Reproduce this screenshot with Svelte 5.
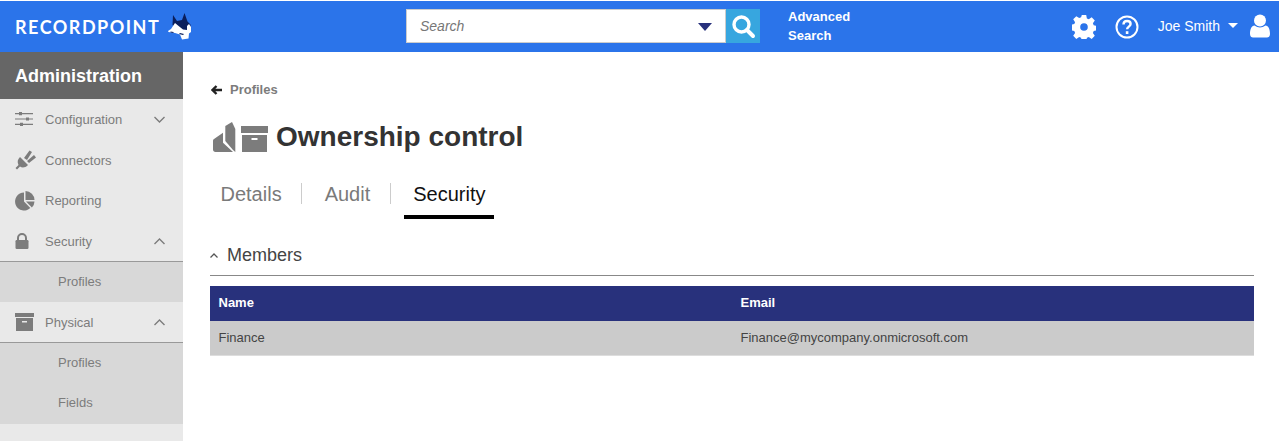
<script>
  const menu = [
    { label: "Configuration", icon: "sliders", arrow: "down" },
    { label: "Connectors", icon: "plug" },
    { label: "Reporting", icon: "pie" },
    { label: "Security", icon: "lock", arrow: "up", children: ["Profiles"] },
    { label: "Physical", icon: "box", arrow: "up", children: ["Profiles", "Fields"] }
  ];
</script>

<div class="page">
  <header class="topbar">
    <div class="logo">
      <span class="wordmark">RECORDPOINT</span>
      <svg class="dog" width="24" height="27" viewBox="0 0 24 27">
        <path fill="#0b1f5c" d="M5 2l4 6 5-1 2.500-7 3 8.500 3 3V18l-3 1-9-2-6-5z" />
        <path fill="#fff" d="M7 10l3 2.500 5 4 4 .5V13l2-2 2 3v5l-2 1.500-.5 5-6.500 1-2-5-5-1.500-6.500-1L0 18l3-2z" />
        <path fill="#0b1f5c" d="M2.500 18.500l3 .5v1l-3-.5zM12 20l4 1-1 1-4-1z" />
      </svg>
    </div>
    <div class="search">
      <div class="search-box">
        <span class="placeholder">Search</span>
        <span class="caret"></span>
      </div>
      <button class="search-btn" aria-label="Search">
        <svg width="26" height="26" viewBox="0 0 26 26" fill="none" stroke="#fff">
          <circle cx="11.500" cy="11.500" r="7.500" stroke-width="3.400" />
          <path d="M17 17l6 6" stroke-width="4" stroke-linecap="round" />
        </svg>
      </button>
    </div>
    <div class="advanced">Advanced<br />Search</div>
    <div class="actions">
      <svg class="gear" width="24" height="24" viewBox="0 0 24 24">
        <path fill="#fff" fill-rule="evenodd" d="M9.800 0h4.400l.7 3.400 1.900.8 2.900-1.900 3.100 3.100-1.900 2.900.8 1.900 3.400.7v4.400l-3.400.7-.8 1.900 1.900 2.900-3.100 3.100-2.900-1.900-1.900.8-.7 3.400H9.800l-.7-3.400-1.900-.8-2.900 1.900-3.100-3.100 1.900-2.900-.8-1.900-3.400-.7V9.800l3.400-.7.8-1.900-1.900-2.900 3.100-3.100 2.900 1.900 1.900-.8z M12 8.200a3.800 3.800 0 1 0 0 7.600 3.800 3.800 0 0 0 0-7.600z" />
      </svg>
      <svg class="help" width="24" height="24" viewBox="0 0 24 24" fill="none" stroke="#fff">
        <circle cx="12" cy="12" r="10.500" stroke-width="2" />
        <path d="M8.500 9.500c0-2.300 1.500-3.500 3.600-3.500s3.500 1.200 3.500 3c0 2.600-3.500 2.600-3.500 5.200" stroke-width="2.400" />
        <path d="M12.100 16.200v2.800" stroke-width="2.600" />
      </svg>
      <span class="user">Joe Smith</span>
      <span class="user-caret"></span>
      <svg class="avatar" width="20" height="24" viewBox="0 0 20 24">
        <circle cx="10" cy="6.500" r="6" fill="#fff" />
        <path fill="#fff" d="M0 20c0-5 1.500-8 4.500-8.500 3.500 2.500 7.500 2.500 11 0 3 .5 4.500 3.500 4.500 8.500 0 2.500-1.500 3.500-3 3.500H3c-1.500 0-3-1-3-3.500z" />
      </svg>
    </div>
  </header>

  <div class="body">
    <aside class="sidebar">
      <h2>Administration</h2>
      {#each menu as item}
        <div class="item" class:open={item.children}>
          <span class="icon">
            {#if item.icon === "sliders"}
              <svg width="18" height="16" viewBox="0 0 18 16" fill="#7c7c7c">
                <path d="M0 2h18v1.200H0zM0 7.400h18v1.200H0zM0 12.800h18V14H0z" />
                <path d="M4 1h3v3.200H4zM11 6.400h3v3.200h-3zM5 11.800h3V15H5z" />
              </svg>
            {:else if item.icon === "plug"}
              <svg width="21" height="20" viewBox="0 0 21 20" fill="#7c7c7c">
                <path d="M5 7l8 8c-3 3-6 3-8 1.500L2 19.500.5 18l3-3C2 12 2.500 9.500 5 7z" />
                <path d="M9 8l5.500-7.500L17 2l-5 8zM12 11l7-6 2 2.500-7 5.500z" />
              </svg>
            {:else if item.icon === "pie"}
              <svg width="20" height="20" viewBox="0 0 20 20" fill="#7c7c7c">
                <path d="M9 1.500A9 9 0 1 0 15.300 17L9 10.500z" />
                <path d="M10.500 0a9 9 0 0 1 9 9h-9z" />
                <path d="M11 10.500h8.500a9 9 0 0 1-2.600 6z" />
              </svg>
            {:else if item.icon === "lock"}
              <svg width="14" height="16" viewBox="0 0 14 16">
                <path fill="none" stroke="#7c7c7c" stroke-width="2" d="M3 8V5a4 4 0 0 1 8 0v3" />
                <rect x="0.500" y="7" width="13" height="9" rx="1.200" fill="#7c7c7c" />
              </svg>
            {:else}
              <svg width="19" height="18" viewBox="0 0 19 18" fill="#7c7c7c">
                <rect width="19" height="4" />
                <path fill-rule="evenodd" d="M1 5h17v13H1zM7 8v1.500h5V8z" />
              </svg>
            {/if}
          </span>
          <span class="label">{item.label}</span>
          {#if item.arrow}
            <svg class="arrow" width="11" height="7" viewBox="0 0 11 7" fill="none" stroke="#7c7c7c" stroke-width="1.400">
              <path d={item.arrow === "up" ? "M.5 6l5-5 5 5" : "M.5 1l5 5 5-5"} />
            </svg>
          {/if}
        </div>
        {#if item.children}
          <div class="sub">
            {#each item.children as child}
              <div class="sub-item">{child}</div>
            {/each}
          </div>
        {/if}
      {/each}
    </aside>

    <main class="content">
      <div class="back">
        <svg width="11" height="10" viewBox="0 0 11 10" fill="none" stroke="#222" stroke-width="2.400">
          <path d="M5.500 1L1.500 5l4 4M2 5h9" />
        </svg>
        <span>Profiles</span>
      </div>
      <div class="title">
        <svg class="t1" width="23" height="30" viewBox="0 0 23 30" fill="#7c7c7c">
          <path d="M12.300 4L19 0l3.300 7v23L20 28l-7.700-9z" />
          <path d="M0 19c0-1 .5-1.500 1-1.900l9-6.400v10L20 30H2.500C1 30 0 29 0 27.500z" />
        </svg>
        <svg class="t2" width="27" height="26" viewBox="0 0 27 26" fill="#7c7c7c">
          <rect width="27" height="7" />
          <path fill-rule="evenodd" d="M1 9h25v17H1zM10.500 12v2h6v-2z" />
        </svg>
        <h1>Ownership control</h1>
      </div>
      <nav class="tabs">
        <span class="tab">Details</span>
        <span class="tab">Audit</span>
        <span class="tab active">Security</span>
      </nav>
      <div class="section">
        <svg width="8" height="5" viewBox="0 0 8 5" fill="none" stroke="#555" stroke-width="1.300">
          <path d="M.500 4.500L4 1l3.500 3.500" />
        </svg>
        <span>Members</span>
      </div>
      <table>
        <thead>
          <tr><th>Name</th><th>Email</th></tr>
        </thead>
        <tbody>
          <tr><td>Finance</td><td>Finance@mycompany.onmicrosoft.com</td></tr>
        </tbody>
      </table>
    </main>
  </div>
</div>

<style>
  :global(body) {
    margin: 0;
    background: #fff;
  }

  .page {
    height: 441px;
    overflow: hidden;
    font-family: "Liberation Sans", Arial, sans-serif;
    padding-top: 1px;
    box-sizing: border-box;
  }

  .topbar {
    height: 51px;
    background: #2b74ea;
    display: flex;
    align-items: center;
    color: #fff;
  }

  .logo {
    width: 406px;
    flex: none;
    display: flex;
    align-items: center;
    padding-left: 15px;
    box-sizing: border-box;
  }

  .wordmark {
    font-family: Lato, sans-serif;
    font-weight: 700;
    font-size: 18px;
    letter-spacing: 1.500px;
    color: #fff;
  }

  .dog {
    margin-left: 8px;
    margin-top: -1px;
  }

  .search {
    display: flex;
    width: 354px;
    height: 34px;
    flex: none;
    margin-top: -1px;
  }

  .search-box {
    flex: 1;
    background: #fff;
    border: 1px solid #ccc;
    display: flex;
    align-items: center;
    justify-content: space-between;
    padding: 0 13px 0 13px;
    box-sizing: border-box;
  }

  .placeholder {
    font-style: italic;
    font-size: 14px;
    color: #777;
  }

  .caret {
    border-left: 7px solid transparent;
    border-right: 7px solid transparent;
    border-top: 8px solid #28317c;
    margin-top: 2px;
  }

  .search-btn {
    width: 34px;
    height: 34px;
    background: #37a6df;
    border: none;
    padding: 0;
    display: flex;
    align-items: center;
    justify-content: center;
  }

  .advanced {
    margin-left: 28px;
    margin-top: -1px;
    font-size: 13px;
    font-weight: 700;
    line-height: 19px;
  }

  .actions {
    margin-left: auto;
    display: flex;
    align-items: center;
    padding-right: 9px;
  }

  .gear {
    margin-right: 19px;
  }

  .help {
    margin-right: 19px;
  }

  .user {
    font-size: 14px;
    margin-top: -2px;
  }

  .user-caret {
    border-left: 5px solid transparent;
    border-right: 5px solid transparent;
    border-top: 5px solid #fff;
    margin: -2px 12px 0 8px;
  }

  .avatar {
    margin-top: -2px;
  }

  .body {
    display: flex;
    height: 389px;
  }

  .sidebar {
    width: 183px;
    flex: none;
    background: #e9e9e9;
    margin-right: 27px;
  }

  .sidebar h2 {
    margin: 0;
    height: 47px;
    background: #666;
    color: #fff;
    font-size: 18px;
    font-weight: 700;
    line-height: 49px;
    padding-left: 15px;
  }

  .item {
    height: 40.750px;
    display: flex;
    align-items: center;
    position: relative;
    box-sizing: border-box;
  }

  .item.open {
    border-bottom: 1px solid #999;
  }

  .icon {
    width: 45px;
    padding-left: 15px;
    box-sizing: border-box;
    flex: none;
    display: flex;
  }

  .label {
    font-size: 13px;
    color: #7c7c7c;
  }

  .arrow {
    margin-left: auto;
    margin-right: 18px;
  }

  .sub {
    background: #d8d8d8;
  }

  .sub-item {
    height: 40.250px;
    line-height: 39px;
    padding-left: 58px;
    font-size: 13px;
    color: #7c7c7c;
  }

  .content {
    width: 1044px;
    flex: none;
  }

  .back {
    display: flex;
    align-items: center;
    gap: 8px;
    margin: 30px 0 0 1px;
    font-size: 13px;
    font-weight: 700;
    color: #7c7c7c;
    line-height: 16px;
  }

  .title {
    display: flex;
    align-items: center;
    margin: 20px 0 0 3px;
    height: 38px;
  }

  .t2 {
    margin: 0 8px 4px 5px;
    align-self: flex-end;
  }

  h1 {
    margin: 0;
    font-size: 28px;
    font-weight: 700;
    color: #333;
  }

  .tabs {
    display: flex;
    margin-top: 17px;
    height: 46px;
  }

  .tab {
    font-size: 20px;
    line-height: 22px;
    color: #7a7a7a;
    padding: 10px 20px 0 0;
    position: relative;
  }

  .tab:nth-child(1) {
    padding-left: 10.500px;
    margin-right: 23px;
  }

  .tab:nth-child(2) {
    padding-right: 21px;
    margin-right: 13px;
  }

  .tab:not(.active)::after {
    content: "";
    position: absolute;
    right: 0;
    top: 10px;
    height: 21px;
    width: 1px;
    background: #ccc;
  }

  .tab.active {
    color: #111;
    border-bottom: 4px solid #000;
    padding: 10px 9px 0;
  }

  .section {
    margin-top: 16px;
    height: 41px;
    box-sizing: border-box;
    border-bottom: 1px solid #888;
    display: flex;
    align-items: center;
    gap: 9px;
    font-size: 18px;
    color: #444;
  }

  table {
    width: 100%;
    margin-top: 10px;
    border-collapse: collapse;
    table-layout: fixed;
    font-size: 13px;
  }

  th {
    box-sizing: border-box;
    background: #28317c;
    color: #fff;
    text-align: left;
    height: 35px;
    padding: 0 8.500px 2px;
    font-weight: 700;
  }

  td {
    box-sizing: border-box;
    background: #cbcbcb;
    height: 34px;
    padding: 0 8.500px 1px;
    color: #444;
    border-bottom: 1px solid #ddd;
  }
</style>
